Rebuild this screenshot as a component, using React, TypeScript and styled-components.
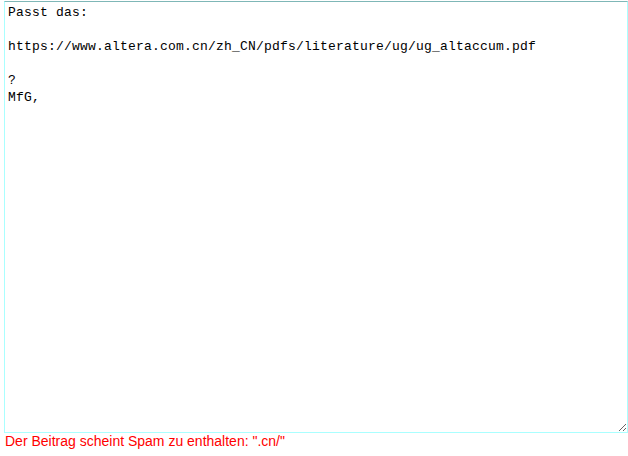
import React from 'react';
import styled, { createGlobalStyle } from 'styled-components';

const GlobalStyle = createGlobalStyle`
  html, body {
    margin: 0;
    padding: 0;
    background: #fff;
  }
`;

const Page = styled.div`
  display: flex;
  flex-direction: column;
  padding: 1px 0 0 4px;
  width: 628px;
  height: 456px;
  box-sizing: border-box;
`;

const PostBox = styled.textarea`
  box-sizing: border-box;
  width: 624px;
  height: 432px;
  margin: 0;
  padding: 2px 2px 2px 3px;
  border: 1px solid #aaffff;
  border-top-color: #7fb7b7;
  outline: none;
  resize: both;
  font-family: "Liberation Mono", "Courier New", monospace;
  font-size: 13px;
  letter-spacing: 0.2px;
  line-height: 17px;
  color: #000;
  background: #fff;
`;

const ErrorText = styled.div`
  font-family: "Liberation Sans", Arial, sans-serif;
  font-size: 14px;
  line-height: 16px;
  color: #ff0000;
  padding-left: 1px;
`;

const text = `Passt das:

https://www.altera.com.cn/zh_CN/pdfs/literature/ug/ug_altaccum.pdf

?
MfG,`;

const App: React.FC = () => {
  return (
    <Page>
      <GlobalStyle />
      <PostBox defaultValue={text} spellCheck={false} />
      <ErrorText>Der Beitrag scheint Spam zu enthalten: ".cn/"</ErrorText>
    </Page>
  );
};

export default App;
